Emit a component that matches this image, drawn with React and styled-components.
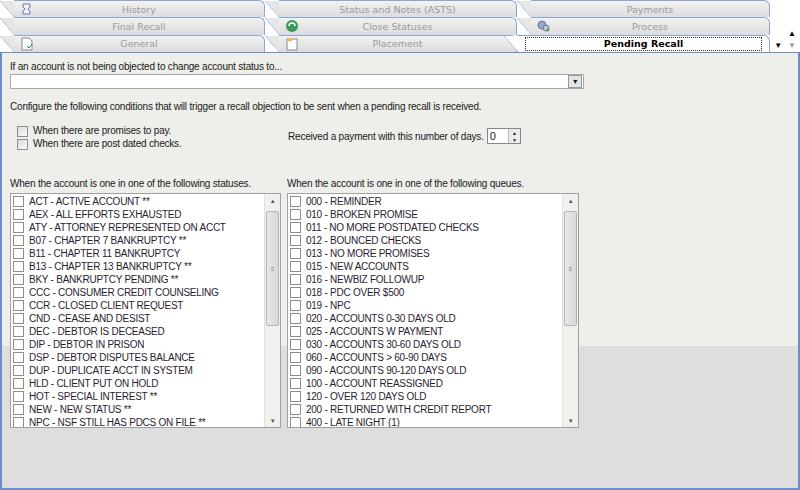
import React from "react";
import styled, { createGlobalStyle } from "styled-components";

const Global = createGlobalStyle`
  body { margin:0; background:#fff; font-family:"Liberation Sans", Arial, sans-serif; }
`;

const Root = styled.div`
  width:800px; height:490px; display:flex; flex-direction:column; overflow:hidden;
`;
const TabArea = styled.div`
  display:flex; height:52px; background:#fff;
`;
const TabGrid = styled.div`
  width:770px; display:grid; grid-template-columns:265px 252px 253px; grid-template-rows:repeat(3,17.33px);
`;
const Tab = styled.div`
  position:relative; display:flex; align-items:center; justify-content:center;
  font-family:"DejaVu Sans", sans-serif; font-size:9.5px; color:${p=>p.$active?"#000":"#9a9a9a"};
  font-weight:${p=>p.$active?"bold":"normal"};
  background:${p=>p.$active?"#fff":"linear-gradient(#f2f2f2,#dcdcdc)"};
  border-top:1px solid #8aa6d8; border-right:1px solid #8aa6d8;
  border-radius:0 6px 0 0; margin-left:${p=>p.$active?"0":"14px"};
  ${p=>p.$active && "border-left:1px solid #8aa6d8;"}
  &::before{ content:""; position:absolute; left:-14px; top:0; bottom:0; width:14px;
    background:linear-gradient(to top right, transparent 48%, #a9bde0 50%, ${p=>p.$active?"#fff":"#e6e6e6"} 54%); }
`;
const FocusBox = styled.span`
  border:1px dotted #333; width:calc(100% - 16px); text-align:center; padding:0; line-height:12px;
`;
const TabIcon = styled.span`
  position:absolute; left:6px; top:1px; width:14px; height:14px; display:flex;
`;
const Arrows = styled.div`
  flex:1; display:flex; flex-direction:column; justify-content:flex-end; align-items:flex-end; padding:0 4px 2px 0; gap:3px;
  font-size:8px; line-height:9px; color:#000;
`;
const ArrowRow = styled.div` display:flex; gap:6px; `;
const Panel = styled.div`
  flex:1; border:2px solid #6d8fc9; border-top:1px solid #6d8fc9; background:#dedede; display:flex; flex-direction:column;
`;
const Content = styled.div`
  height:286px; background:#eeeeea; padding:7px 0 0 8px; font-size:10px; letter-spacing:-0.2px; color:#1a1a1a;
  display:flex; flex-direction:column;
`;
const Label = styled.div` line-height:13px; `;
const Combo = styled.div`
  margin-top:1px; width:574px; height:17px; background:#fff; border:1px solid #a9a9a9; display:flex; justify-content:flex-end; align-items:center; padding-right:1px; box-sizing:border-box;
`;
const DropBtn = styled.div`
  width:14px; height:13px; background:#e4e4e4; border:1px solid #999; box-sizing:border-box; display:flex; align-items:center; justify-content:center; font-size:7px;
`;
const Para = styled.div` margin-top:11px; line-height:13px; `;
const OptionsRow = styled.div` display:flex; margin-top:12px; `;
const Checks = styled.div` width:271px; padding-left:7px; display:flex; flex-direction:column; gap:1px; `;
const CheckLine = styled.label` display:flex; align-items:center; gap:5px; line-height:12px; `;
const Box = styled.span`
  width:9px; height:9px; border:1px solid #8e8e8e; background:${p=>p.$white?"#fff":"linear-gradient(135deg,#dcdcdc,#fafafa)"}; display:inline-block; flex:none;
`;
const Pay = styled.div` margin-top:2px; display:flex; align-items:center; gap:3px; height:18px; `;
const Spin = styled.div`
  width:34px; height:16px; border:1px solid #888; background:#fff; display:flex; box-sizing:border-box;
`;
const SpinVal = styled.span` flex:1; padding-left:2px; line-height:14px; font-size:11px; `;
const SpinBtns = styled.div` width:11px; display:flex; flex-direction:column; border-left:1px solid #bbb; background:#ececec; font-size:5px; align-items:center; justify-content:space-around; `;
const Lists = styled.div` display:flex; gap:6px; margin-top:27px; `;
const ListCol = styled.div` display:flex; flex-direction:column; width:${p=>p.$w}px; `;
const List = styled.div`
  margin-top:3px; height:235px; background:#fff; border:1px solid #a0a0a0; box-sizing:border-box; display:flex; position:relative; z-index:1;
`;
const Items = styled.div` flex:1; padding:1px 0 0 2px; overflow:hidden; `;
const Item = styled.div`
  display:flex; align-items:center; gap:5px; height:13px; font-size:10px; letter-spacing:-0.25px; color:#2a1c30; white-space:nowrap;
`;
const Scroll = styled.div`
  width:15px; background:#f0f0ec; border-left:1px solid #e0e0e0; position:relative; display:flex; flex-direction:column; align-items:center;
`;
const Thumb = styled.div`
  position:absolute; top:17px; left:1px; width:11px; height:113px; background:linear-gradient(90deg,#e8e8e8,#d8d8d8); border:1px solid #b5b5b5; border-radius:2px;
  display:flex; align-items:center; justify-content:center; font-size:6px; color:#777;
`;
const ScrollArrow = styled.span` font-size:6px; color:#555; position:absolute; ${p=>p.$bottom?"bottom:3px;":"top:4px;"} `;

const statuses = ["ACT - ACTIVE ACCOUNT **","AEX - ALL EFFORTS EXHAUSTED","ATY - ATTORNEY REPRESENTED ON ACCT","B07 - CHAPTER 7 BANKRUPTCY **","B11 - CHAPTER 11 BANKRUPTCY","B13 - CHAPTER 13 BANKRUPTCY **","BKY - BANKRUPTCY PENDING **","CCC - CONSUMER CREDIT COUNSELING","CCR - CLOSED CLIENT REQUEST","CND - CEASE AND DESIST","DEC - DEBTOR IS DECEASED","DIP - DEBTOR IN PRISON","DSP - DEBTOR DISPUTES BALANCE","DUP - DUPLICATE ACCT IN SYSTEM","HLD - CLIENT PUT ON HOLD","HOT - SPECIAL INTEREST **","NEW - NEW STATUS **","NPC - NSF STILL HAS PDCS ON FILE **"];
const queues = ["000 - REMINDER","010 - BROKEN PROMISE","011 - NO MORE POSTDATED CHECKS","012 - BOUNCED CHECKS","013 - NO MORE PROMISES","015 - NEW ACCOUNTS","016 - NEWBIZ FOLLOWUP","018 - PDC OVER $500","019 - NPC","020 - ACCOUNTS 0-30 DAYS OLD","025 - ACCOUNTS  W PAYMENT","030 - ACCOUNTS 30-60 DAYS OLD","060 - ACCOUNTS > 60-90 DAYS","090 - ACCOUNTS  90-120 DAYS OLD","100 - ACCOUNT REASSIGNED","120 - OVER 120 DAYS OLD","200 - RETURNED WITH CREDIT REPORT","400 - LATE NIGHT (1)"];

const icons = {
  history: <svg width="14" height="14" viewBox="0 0 14 14"><path d="M3 2h7v3l-2 2 2 2v3H3V9l2-2-2-2z" fill="#eef" stroke="#6a7aa8"/></svg>,
  close: <svg width="14" height="14" viewBox="0 0 14 14"><circle cx="7" cy="7" r="6" fill="#3a9a5a"/><path d="M4 7a3 3 0 0 1 6 0" stroke="#fff" fill="none" strokeWidth="1.5"/></svg>,
  general: <svg width="14" height="14" viewBox="0 0 14 14"><path d="M2 1h7l3 3v9H2z" fill="#fff" stroke="#888"/><path d="M7 9l2 2 3-4" stroke="#3a6ab0" fill="none"/></svg>,
  place: <svg width="14" height="14" viewBox="0 0 14 14"><rect x="2" y="2" width="10" height="11" fill="#fff" stroke="#8a8a8a"/><rect x="3" y="1" width="4" height="3" fill="#e8b860"/></svg>,
  process: <svg width="14" height="14" viewBox="0 0 14 14"><circle cx="5" cy="6" r="4" fill="#9aa8c8" stroke="#6a7898"/><circle cx="9" cy="9" r="3" fill="#b8c4dc" stroke="#6a7898"/><path d="M10 9l3 2-3 2z" fill="#4ab04a"/></svg>,
};

const tabs = [
  {t:"History",i:"history"},{t:"Status and Notes (ASTS)"},{t:"Payments"},
  {t:"Final Recall"},{t:"Close Statuses",i:"close"},{t:"Process",i:"process"},
  {t:"General",i:"general"},{t:"Placement",i:"place"},{t:"Pending Recall",a:true},
];

export default function App(){
  return (<Root><Global/>
    <TabArea>
      <TabGrid>
        {tabs.map((x,k)=>(
          <Tab key={k} $active={x.a}>
            {x.i && <TabIcon>{icons[x.i]}</TabIcon>}
            {x.a ? <FocusBox>{x.t}</FocusBox> : x.t}
          </Tab>))}
      </TabGrid>
      <Arrows><span>▲</span><ArrowRow><span>▼</span><span style={{color:"#999"}}>▼</span></ArrowRow></Arrows>
    </TabArea>
    <Panel>
      <Content>
        <Label>If an account is not being objected to change account status to...</Label>
        <Combo><DropBtn>▼</DropBtn></Combo>
        <Para>Configure the following conditions that will trigger a recall objection to be sent when a pending recall is received.</Para>
        <OptionsRow>
          <Checks>
            <CheckLine><Box/>When there are promises to pay.</CheckLine>
            <CheckLine><Box/>When there are post dated checks.</CheckLine>
          </Checks>
          <Pay>Received a payment with this number of days.
            <Spin><SpinVal>0</SpinVal><SpinBtns><span>▲</span><span>▼</span></SpinBtns></Spin>
          </Pay>
        </OptionsRow>
        <Lists>
          <ListCol $w={271}>
            <Label>When the account is one in one of the following statuses.</Label>
            <List><Items>{statuses.map(s=><Item key={s}><Box $white/>{s}</Item>)}</Items>
              <Scroll><ScrollArrow>▲</ScrollArrow><Thumb>≡</Thumb><ScrollArrow $bottom>▼</ScrollArrow></Scroll></List>
          </ListCol>
          <ListCol $w={292}>
            <Label>When the account is one in one of the following queues.</Label>
            <List><Items>{queues.map(s=><Item key={s}><Box $white/>{s}</Item>)}</Items>
              <Scroll><ScrollArrow>▲</ScrollArrow><Thumb>≡</Thumb><ScrollArrow $bottom>▼</ScrollArrow></Scroll></List>
          </ListCol>
        </Lists>
      </Content>
    </Panel>
  </Root>);
}
